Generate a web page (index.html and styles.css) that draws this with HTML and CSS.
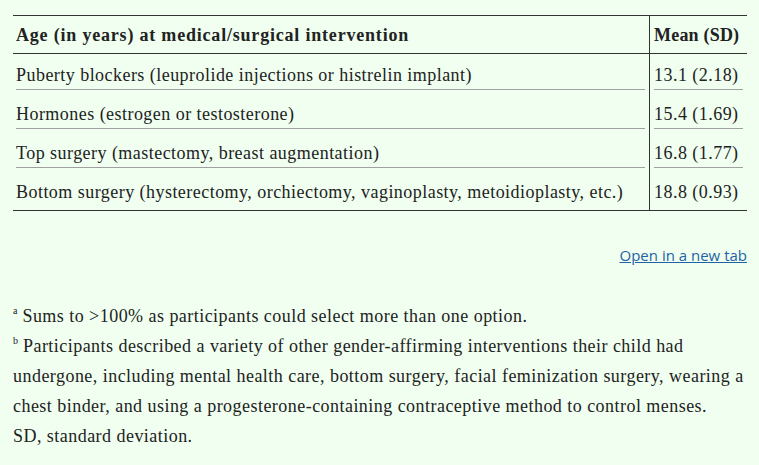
FILE: index.html
```html
<!DOCTYPE html>
<html lang="en">
<head>
<meta charset="utf-8">
<title>Table</title>
<link rel="stylesheet" href="styles.css">
</head>
<body>
<main class="page">
  <table class="data">
    <thead>
      <tr>
        <th class="c1"><div class="cell">Age (in years) at medical/surgical intervention</div></th>
        <th class="c2"><div class="cell">Mean (SD)</div></th>
      </tr>
    </thead>
    <tbody>
      <tr>
        <td class="c1"><div class="cell">Puberty blockers (leuprolide injections or histrelin implant)</div></td>
        <td class="c2"><div class="cell">13.1 (2.18)</div></td>
      </tr>
      <tr>
        <td class="c1"><div class="cell">Hormones (estrogen or testosterone)</div></td>
        <td class="c2"><div class="cell">15.4 (1.69)</div></td>
      </tr>
      <tr>
        <td class="c1"><div class="cell">Top surgery (mastectomy, breast augmentation)</div></td>
        <td class="c2"><div class="cell">16.8 (1.77)</div></td>
      </tr>
      <tr class="last">
        <td class="c1"><div class="cell">Bottom surgery (hysterectomy, orchiectomy, vaginoplasty, metoidioplasty, etc.)</div></td>
        <td class="c2"><div class="cell">18.8 (0.93)</div></td>
      </tr>
    </tbody>
  </table>
  <div class="links"><a href="#" class="newtab">Open in a new tab</a></div>
  <div class="notes">
    <p><sup>a</sup> Sums to &gt;100% as participants could select more than one option.</p>
    <p><sup>b</sup> Participants described a variety of other gender-affirming interventions their child had undergone, including mental health care, bottom surgery, facial feminization surgery, wearing a chest binder, and using a progesterone-containing contraceptive method to control menses.</p>
    <p>SD, standard deviation.</p>
  </div>
</main>
</body>
</html>
```
FILE: styles.css
```css
html, body {
  margin: 0;
  padding: 0;
  background: #f0fff0;
}
body {
  font-family: "Liberation Serif", "Times New Roman", serif;
  font-size: 18px;
  letter-spacing: 0.46px;
  color: #222;
}
.page {
  padding: 15px 12px 0 13px;
}
.data {
  width: 734px;
  table-layout: fixed;
  border-collapse: separate;
  border-spacing: 0;
  border-top: 1px solid #333;
  border-bottom: 1px solid #333;
}
.data th, .data td {
  box-sizing: border-box;
  text-align: left;
  vertical-align: top;
  line-height: 26px;
  white-space: nowrap;
}
.data th {
  font-weight: bold;
  letter-spacing: 0.8px;
  padding-top: 6px;
  padding-bottom: 5px;
  border-bottom: 1px solid #333;
}
.data th.c2 {
  letter-spacing: 0.2px;
}
.data td {
  padding-top: 8px;
  padding-bottom: 3px;
}
.data td .cell {
  padding-bottom: 1px;
  border-bottom: 1px solid #a0a0a0;
}
.data tr.last td .cell {
  border-bottom-color: transparent;
}
.c1 {
  width: 637px;
  padding-left: 3px;
  padding-right: 4px;
  border-right: 1px solid #333;
}
.c2 {
  width: 97px;
  padding-left: 4px;
  padding-right: 4px;
}
.links {
  padding-top: 34px;
  text-align: right;
  line-height: 20px;
}
.newtab {
  font-family: "Open Sans", "Liberation Sans", sans-serif;
  font-size: 15px;
  letter-spacing: 0;
  color: #1f63a6;
  text-decoration: underline;
}
.notes {
  margin-top: 36px;
  line-height: 30px;
}
.notes p {
  margin: 0;
}
.notes sup {
  font-size: 10px;
  letter-spacing: 0;
  line-height: 0;
  vertical-align: 8px;
}
```
